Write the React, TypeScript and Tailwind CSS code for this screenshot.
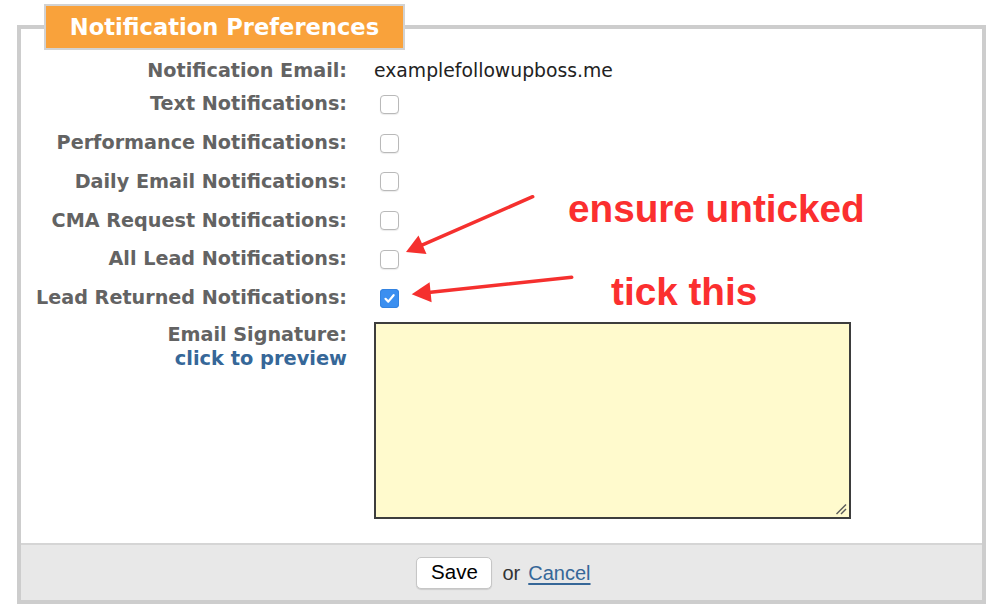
import React from "react";

const labelFont = { fontFamily: '"DejaVu Sans", Verdana, sans-serif' };

function Checkbox({ checked = false }: { checked?: boolean }) {
  if (checked) {
    return (
      <div className="ml-[6px] flex h-[19px] w-[19px] items-center justify-center rounded-[4px] bg-[#3b8ff0] shadow-[inset_0_0_0_1px_#3483e0]">
        <svg width="13" height="13" viewBox="0 0 13 13">
          <path d="M2.5 6.8 L5.3 9.6 L10.6 3.2" fill="none" stroke="#ffffff" strokeWidth="2.2" strokeLinecap="round" strokeLinejoin="round" />
        </svg>
      </div>
    );
  }
  return (
    <div className="ml-[6px] h-[19px] w-[19px] rounded-[4px] border border-[#b9b9b9] bg-white shadow-[0_1px_1px_rgba(0,0,0,0.08)]" />
  );
}

function Row({ label, children, first = false }: { label: string; children: React.ReactNode; first?: boolean }) {
  return (
    <div className={`flex items-center ${first ? "h-[29px]" : "h-[38.75px]"}`}>
      <div className="w-[326px] shrink-0 text-right text-[19.2px] font-bold leading-[24px] text-[#636363]" style={labelFont}>
        {label}
      </div>
      <div className="ml-[27px] flex items-center">{children}</div>
    </div>
  );
}

export default function App() {
  return (
    <div className="relative h-[616px] w-[1000px] overflow-hidden bg-white">
      <div className="pl-[17px] pt-[4px]">
        {/* legend */}
        <div className="relative z-10 ml-[27px] flex h-[46px] w-[361px] items-center justify-center border-2 border-[#d2d2d2] bg-[#f9a23b]">
          <span className="text-[22.6px] font-bold leading-none text-white" style={labelFont}>
            Notification Preferences
          </span>
        </div>
        {/* box */}
        <div className="-mt-[25px] w-[969px] border-4 border-[#cdcdcd] bg-white">
          <div className="pt-[27px]">
            <Row label="Notification Email:" first>
              <span className="text-[18.8px] leading-[24px] text-[#222222]" style={labelFont}>
                examplefollowupboss.me
              </span>
            </Row>
            <Row label="Text Notifications:">
              <Checkbox />
            </Row>
            <Row label="Performance Notifications:">
              <Checkbox />
            </Row>
            <Row label="Daily Email Notifications:">
              <Checkbox />
            </Row>
            <Row label="CMA Request Notifications:">
              <Checkbox />
            </Row>
            <Row label="All Lead Notifications:">
              <Checkbox />
            </Row>
            <Row label="Lead Returned Notifications:">
              <Checkbox checked />
            </Row>
            <div className="mt-[4.5px] flex items-start">
              <div className="w-[326px] shrink-0 pt-[1px] text-right text-[19.2px] font-bold leading-[24px]" style={labelFont}>
                <div className="text-[#636363]">Email Signature:</div>
                <div className="text-[19.4px] text-[#366798]">click to preview</div>
              </div>
              <div className="relative ml-[27px] h-[197px] w-[477px] border-2 border-[#3d3d3d] bg-[#fffacd]">
                <svg className="absolute bottom-[2px] right-[2px]" width="12" height="12" viewBox="0 0 12 12">
                  <line x1="1.5" y1="11" x2="11" y2="1.5" stroke="#5a5a5a" strokeWidth="1.4" />
                  <line x1="6" y1="11" x2="11" y2="6" stroke="#5a5a5a" strokeWidth="1.4" />
                </svg>
              </div>
            </div>
            <div className="h-[24px]" />
          </div>
          {/* footer */}
          <div className="flex h-[57px] items-center justify-center border-t-2 border-[#d5d5d5] bg-[#e8e8e8] pl-[4px]" style={{ fontFamily: '"Liberation Sans", Arial, sans-serif' }}>
            <button className="h-[32px] w-[76px] rounded-[5px] border border-[#c6c6c6] bg-white text-[20.5px] leading-none text-black shadow-[0_1px_1px_rgba(0,0,0,0.12)]">
              Save
            </button>
            <span className="ml-[10px] text-[20px] text-[#333333]">or</span>
            <a className="ml-[8px] text-[20px] text-[#366798] underline underline-offset-[3px]" href="#">
              Cancel
            </a>
          </div>
        </div>
      </div>

      {/* annotations */}
      <div
        className="absolute left-[568px] top-[190px] text-[38.7px] font-bold leading-[38px] whitespace-nowrap text-[#fb2f2f]"
        style={{ fontFamily: '"Liberation Sans", Arial, sans-serif' }}
      >
        ensure unticked
      </div>
      <div
        className="absolute left-[611px] top-[273px] text-[38.7px] font-bold leading-[38px] whitespace-nowrap text-[#fb2f2f]"
        style={{ fontFamily: '"Liberation Sans", Arial, sans-serif' }}
      >
        tick this
      </div>
      <svg className="pointer-events-none absolute left-0 top-0" width="1000" height="616" viewBox="0 0 1000 616">
        <line x1="532.7" y1="196.7" x2="422.5" y2="244.8" stroke="#f5302e" strokeWidth="3.5" strokeLinecap="round" />
        <polygon points="406,252 426.5,254 418.5,235.6" fill="#f5302e" />
        <line x1="571.7" y1="277.3" x2="430.6" y2="292.3" stroke="#f5302e" strokeWidth="3.5" strokeLinecap="round" />
        <polygon points="411.7,294.3 431.6,302.3 429.6,282.3" fill="#f5302e" />
      </svg>
    </div>
  );
}
